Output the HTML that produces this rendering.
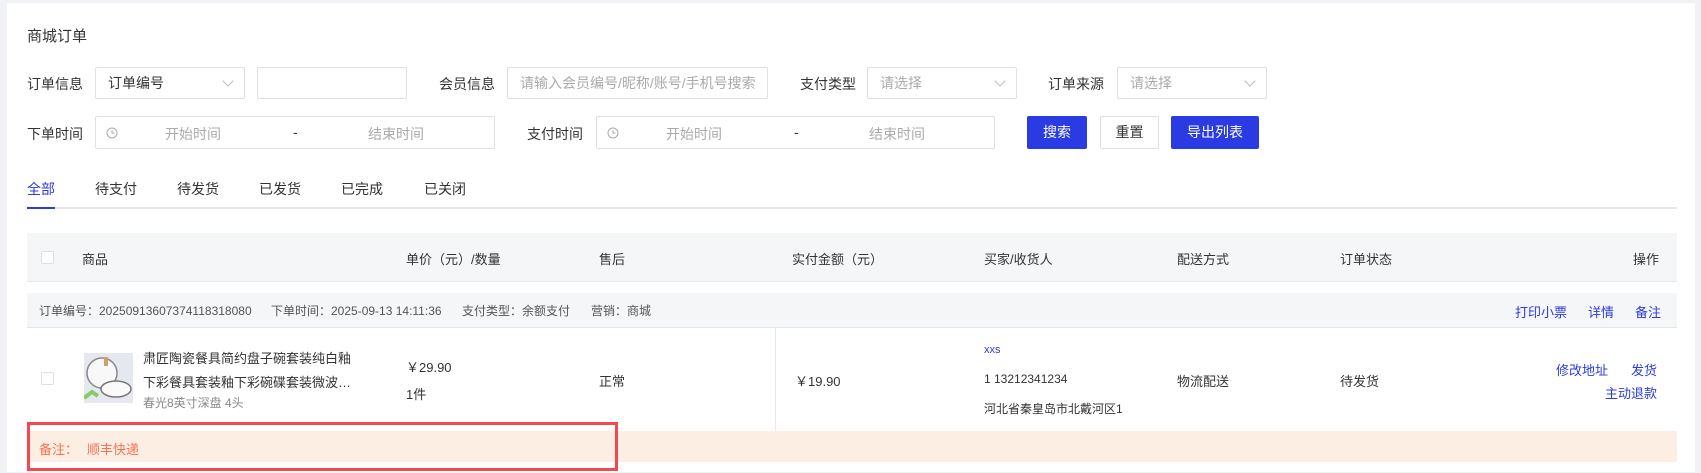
<!DOCTYPE html>
<html><head><meta charset="utf-8">
<style>
*{margin:0;padding:0;box-sizing:border-box}
body{width:1701px;height:473px;background:#f0f2f5;font-family:"Liberation Sans","Noto Sans CJK SC",sans-serif;color:#333;position:relative;overflow:hidden}
.card{position:absolute;left:7px;top:3px;width:1688px;height:469px;background:#fff}
.a{position:absolute;white-space:nowrap}
.lbl{font-size:14px;color:#333}
.box{position:absolute;border:1px solid #dcdfe6;background:#fff;height:32px;border-radius:2px;font-size:14px;line-height:30px;padding-left:12px;color:#333}
.ph{color:#aaa}
.chev{position:absolute;right:12px;top:9px;width:8px;height:8px;border-right:1px solid #bbb;border-bottom:1px solid #bbb;transform:rotate(45deg)}
.btn{position:absolute;top:116px;height:33px;border-radius:2px;font-size:14px;line-height:33px;text-align:center}
.blue{background:#2a3be3;color:#fff}
.tab{position:absolute;top:179px;font-size:14px;color:#333}
.t13{font-size:13px}
.t12{font-size:12px;color:#555}
.lk{color:#2a3be3}
</style></head><body>
<div class="card"></div>
<div class="a" style="left:27px;top:25px;font-size:15px">商城订单</div>

<div class="a lbl" style="left:27px;top:74px">订单信息</div>
<div class="box" style="left:95px;top:67px;width:150px">订单编号<span class="chev"></span></div>
<div class="box" style="left:257px;top:67px;width:150px"></div>
<div class="a lbl" style="left:439px;top:74px">会员信息</div>
<div class="box ph" style="left:507px;top:67px;width:261px">请输入会员编号/昵称/账号/手机号搜索</div>
<div class="a lbl" style="left:800px;top:74px">支付类型</div>
<div class="box ph" style="left:867px;top:67px;width:150px">请选择<span class="chev"></span></div>
<div class="a lbl" style="left:1048px;top:74px">订单来源</div>
<div class="box ph" style="left:1117px;top:67px;width:150px">请选择<span class="chev"></span></div>

<div class="a lbl" style="left:27px;top:124px">下单时间</div>
<div class="box ph" style="left:95px;top:116px;width:400px;height:33px"></div>
<svg class="a" style="left:106px;top:127px" width="12" height="12" viewBox="0 0 12 12"><circle cx="6" cy="6" r="5" fill="none" stroke="#aaa"/><path d="M6 3v3h2.5" fill="none" stroke="#aaa"/></svg>
<div class="a lbl ph" style="left:165px;top:124px">开始时间</div>
<div class="a lbl" style="left:293px;top:124px">-</div>
<div class="a lbl ph" style="left:368px;top:124px">结束时间</div>
<div class="a lbl" style="left:527px;top:124px">支付时间</div>
<div class="box ph" style="left:596px;top:116px;width:399px;height:33px"></div>
<svg class="a" style="left:607px;top:127px" width="12" height="12" viewBox="0 0 12 12"><circle cx="6" cy="6" r="5" fill="none" stroke="#aaa"/><path d="M6 3v3h2.5" fill="none" stroke="#aaa"/></svg>
<div class="a lbl ph" style="left:666px;top:124px">开始时间</div>
<div class="a lbl" style="left:794px;top:124px">-</div>
<div class="a lbl ph" style="left:869px;top:124px">结束时间</div>
<div class="btn blue" style="left:1027px;width:60px">搜索</div>
<div class="btn" style="left:1100px;width:59px;border:1px solid #dcdfe6;line-height:31px">重置</div>
<div class="btn blue" style="left:1171px;width:88px">导出列表</div>

<div class="tab" style="left:27px;color:#2a3be3">全部</div>
<div class="tab" style="left:95px">待支付</div>
<div class="tab" style="left:177px">待发货</div>
<div class="tab" style="left:259px">已发货</div>
<div class="tab" style="left:341px">已完成</div>
<div class="tab" style="left:424px">已关闭</div>
<div class="a" style="left:27px;top:207px;width:1650px;height:2px;background:#e4e7ed"></div>
<div class="a" style="left:27px;top:207px;width:28px;height:2px;background:#2a3be3"></div>

<div class="a" style="left:27px;top:233px;width:1650px;height:49px;background:#f5f6f8;border-bottom:1px solid #e8eaee"></div>
<div class="a" style="left:41px;top:251px;width:13px;height:13px;border:1px solid #dcdfe6;background:#fff;border-radius:2px"></div>
<div class="a t13" style="left:82px;top:249px">商品</div>
<div class="a t13" style="left:406px;top:249px">单价（元）/数量</div>
<div class="a t13" style="left:599px;top:249px">售后</div>
<div class="a t13" style="left:792px;top:249px">实付金额（元）</div>
<div class="a t13" style="left:984px;top:249px">买家/收货人</div>
<div class="a t13" style="left:1177px;top:249px">配送方式</div>
<div class="a t13" style="left:1340px;top:249px">订单状态</div>
<div class="a t13" style="left:1633px;top:249px">操作</div>

<div class="a" style="left:27px;top:293px;width:1650px;height:35px;background:#f5f6f8;border-bottom:1px solid #e4e7ed"></div>
<div class="a t12" style="left:39px;top:302px">订单编号：2025091360737411831808<span>0</span></div>
<div class="a t12" style="left:271px;top:302px">下单时间：2025-09-13 14:11:36</div>
<div class="a t12" style="left:462px;top:302px">支付类型：余额支付</div>
<div class="a t12" style="left:591px;top:302px">营销：商城</div>
<div class="a t13 lk" style="left:1515px;top:302px">打印小票</div>
<div class="a t13 lk" style="left:1588px;top:302px">详情</div>
<div class="a t13 lk" style="left:1635px;top:302px">备注</div>

<div class="a" style="left:775px;top:328px;width:1px;height:103px;background:#e8eaee"></div>
<div class="a" style="left:41px;top:372px;width:13px;height:13px;border:1px solid #dcdfe6;border-radius:2px"></div>
<svg class="a" style="left:84px;top:353px" width="49" height="50" viewBox="0 0 49 50"><rect width="49" height="50" fill="#e6e8ef"/><circle cx="18" cy="20" r="15" fill="#f8f8f8" stroke="#888" stroke-width="1.5"/><ellipse cx="32" cy="36" rx="15" ry="8" fill="#fafafa" stroke="#777" stroke-width="1.5"/><rect x="20" y="4" width="4" height="9" fill="#c9a36a"/><path d="M0 45l8-6 6 4" stroke="#8c6" stroke-width="4" fill="none"/></svg>
<div class="a t13" style="left:143px;top:347px;line-height:24px;color:#333">肃匠陶瓷餐具简约盘子碗套装纯白釉<br>下彩餐具套装釉下彩碗碟套装微波…</div>
<div class="a" style="left:143px;top:394px;font-size:12px;color:#888">春光8英寸深盘 4头</div>
<div class="a t13" style="left:406px;top:357px">￥29.90</div>
<div class="a t13" style="left:406px;top:384px">1件</div>
<div class="a t13" style="left:599px;top:371px">正常</div>
<div class="a t13" style="left:795px;top:371px">￥19.90</div>
<div class="a lk" style="left:984px;top:344px;font-size:11px">xxs</div>
<div class="a" style="left:984px;top:372px;font-size:12px">1 13212341234</div>
<div class="a" style="left:984px;top:400px;font-size:12px">河北省秦皇岛市北戴河区1</div>
<div class="a t13" style="left:1177px;top:371px">物流配送</div>
<div class="a t13" style="left:1340px;top:371px">待发货</div>
<div class="a t13 lk" style="left:1556px;top:360px">修改地址</div>
<div class="a t13 lk" style="left:1631px;top:360px">发货</div>
<div class="a t13 lk" style="left:1605px;top:383px">主动退款</div>

<div class="a" style="left:27px;top:431px;width:1650px;height:31px;background:#fdeee4"></div>
<div class="a t13" style="left:39px;top:439px;color:#f4744f">备注：</div>
<div class="a t13" style="left:87px;top:439px;color:#f4744f">顺丰快递</div>
<div class="a" style="left:27px;top:422px;width:591px;height:49px;border:3px solid #f24a4c"></div>
</body></html>
